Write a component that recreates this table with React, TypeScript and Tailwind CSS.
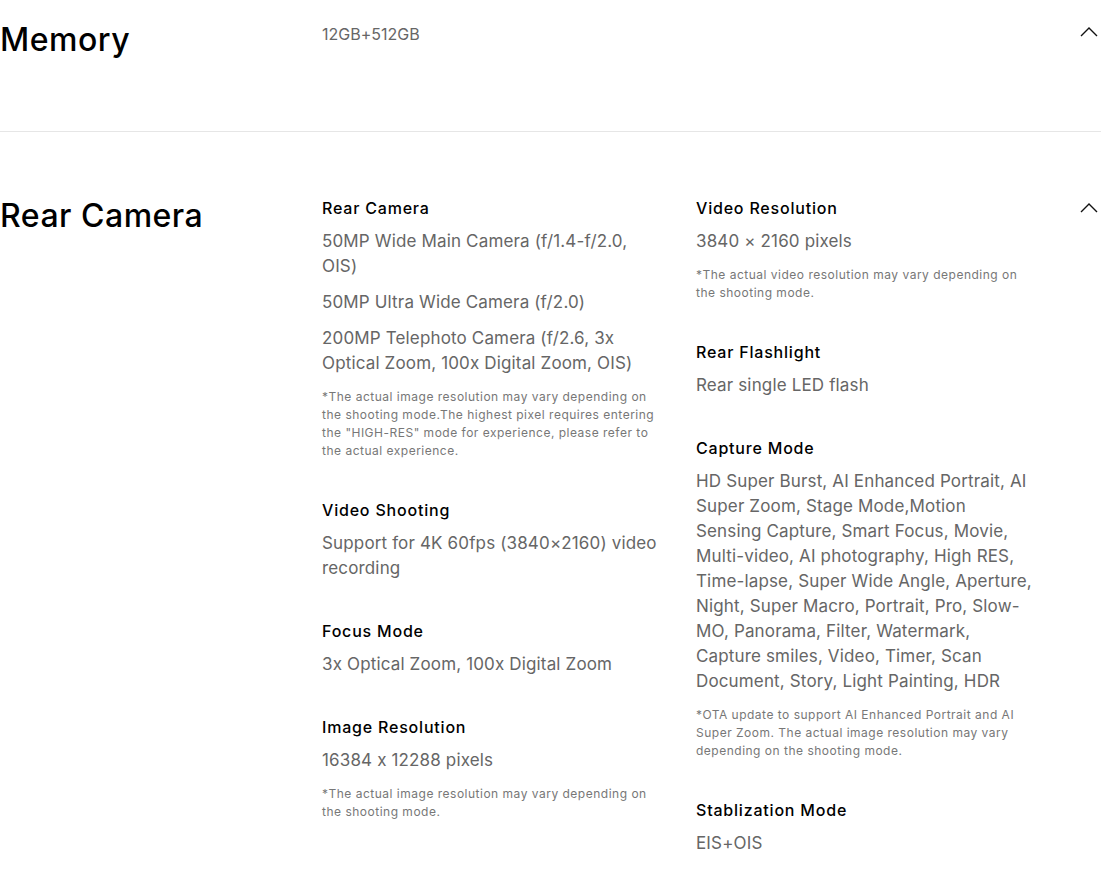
type Spec = {
  title: string
  values: string[]
  note?: string
}

// line breaks follow the original layout
const leftCol: Spec[] = [
  {
    title: "Rear Camera",
    values: [
      "50MP Wide Main Camera (f/1.4-f/2.0,\nOIS)",
      "50MP Ultra Wide Camera (f/2.0)",
      "200MP Telephoto Camera (f/2.6, 3x\nOptical Zoom, 100x Digital Zoom, OIS)",
    ],
    note:
      '*The actual image resolution may vary depending on the shooting mode.The highest pixel requires entering the "HIGH-RES" mode for experience, please refer to the actual experience.',
  },
  {
    title: "Video Shooting",
    values: ["Support for 4K 60fps (3840×2160) video\nrecording"],
  },
  {
    title: "Focus Mode",
    values: ["3x Optical Zoom, 100x Digital Zoom"],
  },
  {
    title: "Image Resolution",
    values: ["16384 x 12288 pixels"],
    note: "*The actual image resolution may vary depending on the shooting mode.",
  },
]

const rightCol: Spec[] = [
  {
    title: "Video Resolution",
    values: ["3840 × 2160 pixels"],
    note: "*The actual video resolution may vary depending on the shooting mode.",
  },
  {
    title: "Rear Flashlight",
    values: ["Rear single LED flash"],
  },
  {
    title: "Capture Mode",
    values: [
      "HD Super Burst, AI Enhanced Portrait, AI\nSuper Zoom, Stage Mode,Motion\nSensing Capture, Smart Focus, Movie,\nMulti-video, AI photography, High RES,\nTime-lapse, Super Wide Angle, Aperture,\nNight, Super Macro, Portrait, Pro, Slow-\nMO, Panorama, Filter, Watermark,\nCapture smiles, Video, Timer, Scan\nDocument, Story, Light Painting, HDR",
    ],
    note:
      "*OTA update to support AI Enhanced Portrait and AI Super Zoom. The actual image resolution may vary depending on the shooting mode.",
  },
  {
    title: "Stablization Mode",
    values: ["EIS+OIS"],
  },
]

function Chevron() {
  return (
    <svg width="18" height="11" viewBox="0 0 18 11" fill="none" className="block">
      <path d="M1 10 L9 2 L17 10" stroke="#111" strokeWidth="1.4" />
    </svg>
  )
}

function SpecItem({ spec }: { spec: Spec }) {
  return (
    <div>
      <h4 className="text-[16px] leading-[24px] font-medium tracking-[0.8px] text-black">
        {spec.title}
      </h4>
      <div className="mt-[9px] space-y-[11px]">
        {spec.values.map((v, i) => (
          <p key={i} className="whitespace-pre text-[17px] leading-[25px] tracking-[0.15px] text-[#666]">
            {v}
          </p>
        ))}
      </div>
      {spec.note && (
        <p className="mt-[12px] text-[12px] leading-[18px] tracking-[0.5px] text-[#777]">
          {spec.note}
        </p>
      )}
    </div>
  )
}

export default function App() {
  return (
    <div className="w-[1101px] min-h-[871px] bg-white font-[Inter,'Noto_Sans',sans-serif] [font-feature-settings:'calt'_0]">
      <section className="flex h-[132px] pt-[20px] border-b border-[#e6e6e6]">
        <h2 className="w-[322px] shrink-0 text-[32px] leading-[40px] font-medium tracking-[0.5px] text-black">
          Memory
        </h2>
        <div className="mt-[2px] text-[16px] leading-[24px] text-[#666]">12GB+512GB</div>
        <div className="ml-auto mr-[3px] mt-[6px]">
          <Chevron />
        </div>
      </section>

      <section className="flex pt-[64px] pb-[20px]">
        <h2 className="w-[322px] shrink-0 text-[32px] leading-[40px] font-medium tracking-[0.5px] text-black">
          Rear Camera
        </h2>
        <div className="w-[340px] shrink-0 flex flex-col gap-[38px]">
          {leftCol.map((s) => (
            <SpecItem key={s.title} spec={s} />
          ))}
        </div>
        <div className="ml-[34px] w-[340px] shrink-0 flex flex-col gap-[38px]">
          {rightCol.map((s) => (
            <SpecItem key={s.title} spec={s} />
          ))}
        </div>
        <div className="ml-auto mr-[3px] mt-[6px]">
          <Chevron />
        </div>
      </section>
    </div>
  )
}
